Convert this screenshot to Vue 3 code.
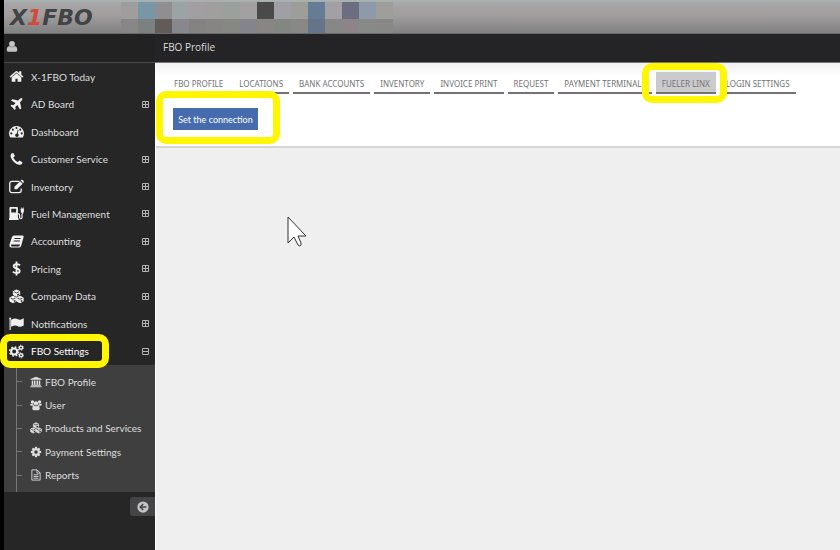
<script setup>
const pixels = [
  ['#a09d9e', '#7796a6', '#918e91', '#9ba3a5', '#a29fa2', '#a19e9e', '#9ca09d', '#a3a0a2', '#4a4a4a', '#a09fa6', '#9d9e9a', '#647c96', '#a39fa2', '#6a6e80', '#8e9aaa', '#9e9e9a'],
  ['#888787', '#7b8080', '#615c58', '#88878e', '#858282', '#868583', '#868884', '#84848c', '#888584', '#838782', '#888886', '#66748a', '#888788', '#8c8487', '#878b87', '#888887'],
].flat()

const menu = [
  { label: 'X-1FBO Today', icon: 'home' },
  { label: 'AD Board', icon: 'plane', more: true },
  { label: 'Dashboard', icon: 'gauge' },
  { label: 'Customer Service', icon: 'phone', more: true },
  { label: 'Inventory', icon: 'edit', more: true },
  { label: 'Fuel Management', icon: 'fuel', more: true },
  { label: 'Accounting', icon: 'book', more: true },
  { label: 'Pricing', icon: 'dollar', more: true },
  { label: 'Company Data', icon: 'cubes', more: true },
  { label: 'Notifications', icon: 'flag', more: true },
  { label: 'FBO Settings', icon: 'cogs', more: true, open: true },
]

const settings = [
  { label: 'FBO Profile', icon: 'bank' },
  { label: 'User', icon: 'users' },
  { label: 'Products and Services', icon: 'cubes' },
  { label: 'Payment Settings', icon: 'cog' },
  { label: 'Reports', icon: 'report' },
]

const tabs = ['FBO PROFILE', 'LOCATIONS', 'BANK ACCOUNTS', 'INVENTORY', 'INVOICE PRINT', 'REQUEST', 'PAYMENT TERMINALS', 'FUELER LINX', 'LOGIN SETTINGS']
const activeTab = 'FUELER LINX'
</script>

<template>
  <svg class="sprite" aria-hidden="true">
    <symbol id="home" viewBox="0 0 1792 1792"><path d="M1472 992v480q0 26-19 45t-45 19h-384v-384h-256v384h-384q-26 0-45-19t-19-45v-480q0-1 .5-3t.5-3l575-474 575 474q1 2 1 6zm223-69l-62 74q-8 9-21 11h-3q-13 0-21-7l-692-577-692 577q-12 8-24 7-13-2-21-11l-62-74q-8-10-7-23.5t11-21.5l719-599q32-26 76-26t76 26l244 204v-195q0-14 9-23t23-9h192q14 0 23 9t9 23v408l219 182q10 8 11 21.5t-7 23.5z" /></symbol>
    <symbol id="plane" viewBox="0 0 1792 1792"><path d="M1568 160q44 52 12 148t-108 172l-161 161 160 696q5 19-12 33l-128 96q-7 6-19 6-4 0-7-1-15-3-21-16l-279-508-259 259 53 194q5 17-8 31l-96 96q-9 9-23 9h-2q-15-2-24-13l-189-252-252-189q-11-7-13-23-1-13 9-25l96-97q9-9 23-9 6 0 8 1l194 53 259-259-508-279q-14-8-17-24-2-16 9-27l128-128q14-13 30-8l665 159 160-160q76-76 172-108t148 12z" /></symbol>
    <symbol id="gauge" viewBox="0 0 16 16">
      <path fill-rule="evenodd" d="M8 2a8 8 0 0 0-6.800 12.100q.3.400.8.400h12q.5 0 .8-.4A8 8 0 0 0 8 2zM8 3.200a1.100 1.100 0 1 1 0 2.200a1.100 1.100 0 0 1 0-2.200zM4.100 4.900a1.100 1.100 0 1 1 0 2.200a1.100 1.100 0 0 1 0-2.200zM2.400 8.900a1.100 1.100 0 1 1 0 2.200a1.100 1.100 0 0 1 0-2.200zM13.600 8.900a1.100 1.100 0 1 1 0 2.200a1.100 1.100 0 0 1 0-2.200zM12 4.900a1.100 1.100 0 1 1 0 2.200a1.100 1.100 0 0 1 0-2.200zM9.300 6.100l.9.300-.9 3.800a1.900 1.900 0 1 1-.9-.2z" />
    </symbol>
    <symbol id="phone" viewBox="0 0 1792 1792"><path d="M1600 1240q0 27-10 70.5t-21 68.5q-21 50-122 106-94 51-186 51-27 0-53-3.500t-57.500-12.500-47-14.500-55.500-20.500-49-18q-98-35-175-83-127-79-264-216t-216-264q-48-77-83-175-3-9-18-49t-20.500-55.500-14.500-47-12.500-57.500-3.500-53q0-92 51-186 56-101 106-122 25-11 68.500-21t70.500-10q14 0 21 3 18 6 53 76 11 19 30 54t35 63.500 31 53.500q3 4 17.500 25t21.500 35.500 7 28.500q0 20-28.500 50t-62 55-62 53-28.500 46q0 9 5 22.500t8.500 20.500 14 24 11.500 19q76 137 174 235t235 174q2 1 19 11.500t24 14 20.500 8.500 22.500 5q18 0 46-28.500t53-62 55-62 50-28.500q14 0 28.500 7t35.500 21.500 25 17.500q25 15 53.500 31t63.500 35 54 30q70 35 76 53 3 7 3 21z" /></symbol>
    <symbol id="edit" viewBox="0 0 16 16">
      <path d="M11 2.500H3A2.200 2.200 0 0 0 .8 4.700v7.600A2.200 2.200 0 0 0 3 14.500h7.800a2.200 2.200 0 0 0 2.200-2.200V10" fill="none" stroke="currentColor" stroke-width="1.400" />
      <path d="M5.800 8.300l6-6 2.700 2.700-6 6H5.800zM12.500 1.700l.8-.8q.5-.4 1 0l1.500 1.500q.4.500 0 1l-.8.900z" />
    </symbol>
    <symbol id="fuel" viewBox="0 0 16 16">
      <path fill-rule="evenodd" d="M1.500 1h7q1 0 1 1v11h.7v2H0v-2h.5V2q0-1 1-1zM2.400 3v4h5.200V3z" />
      <path d="M9.500 8.500h.8q1 0 1 1v2.800q0 1.300 1.300 1.300t1.300-1.300V9.500q0-1 .6-2l.5-4.500" fill="none" stroke="currentColor" stroke-width="1.300" />
      <path d="M12.200 3.200l1-.4V1.500h.8v1.200h.8V1.500h.8v1.700l.4 2.600-1.500 2-1.600-1z" />
    </symbol>
    <symbol id="book" viewBox="0 0 16 16">
      <path fill-rule="evenodd" d="M5.400 1.500h9q1.500.2 1.200 1.800l-2.600 9.200q-.5 2-2.500 2H2.400Q.2 14.300.5 12l.1-1L3.200 3.300q.6-1.800 2.200-1.800zM6 4.300l-.3 1h6.500l.3-1zM5.200 6.900l-.3 1h6.500l.3-1zM2.500 11.300q-1 1.600.3 1.900h7.500q.8 0 1.100-.9l.3-1z" />
    </symbol>
    <symbol id="dollar" viewBox="0 0 16 16"><path d="M11.800 4.600Q10.200 3.300 8 3.300q-3 0-3 2.200 0 1.500 3 2.400 3.400.9 3.400 2.800 0 2.200-3.300 2.200-2.300 0-4-1.600M8 .5v15" fill="none" stroke="currentColor" stroke-width="2" /></symbol>
    <symbol id="cubes" viewBox="0 0 16 16">
      <g stroke="currentColor" stroke-width="1" stroke-linejoin="round">
        <path d="M8 1l3.400 1.500v3.700L8 7.800 4.600 6.200V2.500z" />
        <path d="M4.300 7.800l3.400 1.500V13l-3.400 1.700L.9 13V9.300z" />
        <path d="M11.700 7.800l3.400 1.500V13l-3.400 1.700L8.300 13V9.300z" />
      </g>
      <g fill="none" stroke="#262627" stroke-width=".9">
        <path d="M5.400 3l2.600 1.100L10.600 3M1.700 9.800l2.600 1.100 2.600-1.100M9.100 9.800l2.600 1.100 2.600-1.100" />
        <path d="M8.800 6.500l1.800-.9M5.100 13.300l1.800-.9M12.500 13.300l1.800-.9" stroke-width="1.500" />
      </g>
    </symbol>
    <symbol id="flag" viewBox="0 0 16 16">
      <path d="M1.200 1.500a1.100 1.100 0 0 1 .6 2V15H.6V3.500a1.100 1.100 0 0 1 .6-2z" />
      <path d="M2.200 3.900Q5 2.600 6.600 2.600q1.200 0 3 .9 1 .6 2.300.4Q13.500 3.600 15.700 2.400v7.700q-2.400 1.400-4 1.400-1.200 0-2.800-.9-1-.5-2.200-.4-1.600 0-4.500 1.300z" />
    </symbol>
    <symbol id="cog" viewBox="0 0 1792 1792"><path d="M1152 896q0-106-75-181t-181-75-181 75-75 181 75 181 181 75 181-75 75-181zm512-109v222q0 12-8 23t-20 13l-185 28q-19 54-39 91 35 50 107 138 10 12 10 25t-9 23q-27 37-99 108t-94 71q-12 0-26-9l-138-108q-44 23-91 38-16 136-29 186-7 28-36 28h-222q-14 0-24.500-8.500t-11.500-21.500l-28-184q-49-16-90-37l-141 107q-10 9-25 9-14 0-25-11-126-114-165-168-7-10-7-23 0-12 8-23 15-21 51-66.500t54-70.500q-27-50-41-99l-183-27q-13-2-21-12.500t-8-23.500v-222q0-12 8-23t19-13l186-28q14-46 39-92-40-57-107-138-10-12-10-24 0-10 9-23 26-36 98.500-107.500t94.500-71.500q13 0 26 10l138 107q44-23 91-38 16-136 29-186 7-28 36-28h222q14 0 24.500 8.500t11.500 21.500l28 184q49 16 90 37l142-107q9-9 24-9 13 0 25 10 129 119 165 170 7 8 7 22 0 12-8 23-15 21-51 66.500t-54 70.500q26 50 41 98l183 28q13 2 21 12.500t8 23.500z" /></symbol>
    <symbol id="cogs" viewBox="0 0 16 16">
      <g fill="none" stroke="currentColor">
        <circle cx="5.500" cy="8" r="3.200" stroke-width="2.200" />
        <circle cx="5.500" cy="8" r="4.800" stroke-width="1.500" stroke-dasharray="1.900 1.870" />
        <circle cx="12.800" cy="3.900" r="1.700" stroke-width="1.400" />
        <circle cx="12.800" cy="3.900" r="2.700" stroke-width="1" stroke-dasharray="1.200 1.630" />
        <circle cx="12.800" cy="12.100" r="1.700" stroke-width="1.400" />
        <circle cx="12.800" cy="12.100" r="2.700" stroke-width="1" stroke-dasharray="1.200 1.630" />
      </g>
    </symbol>
    <symbol id="bank" viewBox="0 0 16 16"><path d="M8 1l7.500 3v1H.5V4zM2.300 6h2v6h1V6h2v6h1.400V6h2v6h1V6h2v6h.8v1H1.500v-1h.8zM.5 13.700h15V15H.5z" /></symbol>
    <symbol id="users" viewBox="0 0 16 16">
      <circle cx="3.300" cy="4" r="2.300" /><circle cx="12.700" cy="4" r="2.300" /><circle cx="8" cy="5.800" r="2.900" />
      <path d="M1.500 6.300q1.500.8 3 .4 0 1.500 1 2.300H1.800Q.3 9 .3 7.600q0-1.200 1.200-1.300zM14.500 6.300q-1.500.8-3 .4 0 1.500-1 2.300h3.700q1.500 0 1.500-1.400 0-1.200-1.200-1.300zM5.300 8.800q2.700 1.700 5.400 0 2.300.3 2.300 4 0 2.200-2 2.200H5q-2 0-2-2.200 0-3.700 2.300-4z" />
    </symbol>
    <symbol id="report" viewBox="0 0 16 16"><path d="M2.500 1.200h7l4 4v9.600h-11zM9.300 1.200v4.200h4.200M4.800 7.700h6.400M4.800 10h6.400M4.800 12.300h6.400" fill="none" stroke="currentColor" stroke-width="1.200" /></symbol>
    <symbol id="person" viewBox="0 0 16 16"><path d="M8 .8a3.900 3.900 0 1 1 0 7.800a3.900 3.900 0 0 1 0-7.800zM4.400 7.600q3.600 2.500 7.200 0 3.400.4 3.400 4.900 0 2.500-2.500 2.500h-9Q1 15 1 12.500q0-4.500 3.400-4.900z" /></symbol>
    <symbol id="back" viewBox="0 0 16 16">
      <circle cx="8" cy="8" r="7.500" />
      <path d="M12.500 8H5M8.300 4L4.300 8l4 4" fill="none" stroke="#454547" stroke-width="2" />
    </symbol>
  </svg>

  <div class="page">
    <header class="brand-bar">
      <a class="logo" href="#" aria-label="X1FBO">X<span class="one">1</span>FBO</a>
      <div class="pixels" aria-hidden="true">
        <i v-for="(color, i) in pixels" :key="i" :style="{ background: color }"></i>
      </div>
    </header>

    <div class="body">
      <aside class="sidebar">
        <div class="account"><svg class="person"><use href="#person" /></svg></div>
        <nav>
          <ul class="menu">
            <li v-for="item in menu" :key="item.label">
              <a href="#" :class="{ marked: item.open }">
                <svg class="icon"><use :href="'#' + item.icon" /></svg>
                <span>{{ item.label }}</span>
                <svg v-if="item.more" class="toggle" viewBox="0 0 7 7">
                  <path :d="item.open ? 'M.5.5h6v6h-6zM0 3.500h7' : 'M.5.5h6v6h-6zM0 3.500h7M3.500 0v7'" />
                </svg>
              </a>
            </li>
          </ul>
          <ul class="submenu">
            <li v-for="item in settings" :key="item.label">
              <a href="#"><svg class="small-icon"><use :href="'#' + item.icon" /></svg>{{ item.label }}</a>
            </li>
          </ul>
        </nav>
        <button class="collapse" type="button" aria-label="Collapse menu"><svg><use href="#back" /></svg></button>
      </aside>

      <main>
        <h1>FBO Profile</h1>
        <section class="panel">
          <nav class="tabs">
            <a v-for="tab in tabs" :key="tab" href="#" :class="{ active: tab === activeTab }">{{ tab }}</a>
          </nav>
          <div class="action"><button class="connect" type="button">Set the connection</button></div>
        </section>
        <svg class="pointer" viewBox="0 0 20 31" aria-hidden="true">
          <path d="M1 1v26l6-6 4 8q2 2 3 0v-2l-3-7h8z" fill="#fff" stroke="#333" />
        </svg>
      </main>
    </div>
  </div>
</template>

<style>
body {
  background: #000;
}
</style>

<style scoped>
* {
  box-sizing: border-box;
}

.page {
  display: flex;
  flex-direction: column;
  min-height: 100vh;
  padding-left: 4px;
  font-family: Lato, "Open Sans", sans-serif;
  font-size: 10px;
  color: #dedede;
}

.sprite {
  position: absolute;
  width: 0;
  height: 0;
}

svg {
  flex: none;
  fill: currentColor;
}

a {
  color: inherit;
  text-decoration: none;
}

ul {
  margin: 0;
  padding: 0;
  list-style: none;
}

button {
  padding: 0;
  border: 0;
  font: inherit;
}

.brand-bar {
  display: flex;
  height: 34px;
  padding-top: 2px;
  border-bottom: 1px solid #6b6b6b;
  background: linear-gradient(#a9b3b3, #a6a4a5 12%, #a09e9f 45%, #828182);
}

.logo {
  width: 117px;
  padding-left: 6px;
  font: italic bold 22px/31px "DejaVu Sans", sans-serif;
  color: #414344;
}

.one {
  color: #d5483c;
}

.pixels {
  display: grid;
  grid-template-columns: repeat(16, 17px);
  grid-template-rows: 17px 14px;
}

.body {
  display: flex;
  flex: 1;
}

.sidebar {
  display: flex;
  flex-direction: column;
  width: 151px;
  background: #262627;
}

.account {
  height: 29px;
  padding: 6px 2px;
  border-bottom: 1px solid #48484a;
  background: #222223;
  color: #c4c4c4;
}

.person {
  display: block;
  width: 12px;
  height: 13px;
}

.menu {
  display: grid;
  grid-auto-rows: 1fr;
  min-height: 302px;
}

.menu a {
  position: relative;
  display: flex;
  align-items: center;
  height: 100%;
  padding: 0 6px 0 5px;
}

.icon {
  width: 15px;
  height: 15px;
  margin-right: 7px;
  color: #f0f0f0;
}

.toggle {
  width: 7px;
  height: 7px;
  margin-left: auto;
  fill: none;
  stroke: #b4b4b4;
}

.menu .marked {
  color: #fff;
}

.marked::after,
.active::after,
.action::after {
  content: "";
  position: absolute;
  z-index: 2;
  border: 7px solid #fff600;
  border-radius: 10px;
  pointer-events: none;
}

.marked::after {
  inset: -4px 46px -3px -4px;
}

.submenu {
  display: grid;
  grid-auto-rows: 1fr;
  min-height: 127px;
  padding: 5px 0 5px 12px;
  background: linear-gradient(90deg, transparent 12px, #777 12px, #777 13px, transparent 13px), #3f3f40;
}

.submenu a {
  display: flex;
  align-items: center;
  height: 100%;
}

.submenu a::before {
  content: "";
  width: 6px;
  height: 1px;
  margin-right: 8px;
  background: #777;
}

.small-icon {
  width: 12px;
  height: 12px;
  margin-right: 3px;
}

.collapse {
  display: flex;
  align-items: center;
  justify-content: center;
  align-self: flex-end;
  width: 25px;
  height: 19px;
  margin-top: 5px;
  border-radius: 3px 0 0 3px;
  background: #454547;
  color: #c4c4c4;
}

.collapse svg {
  width: 12px;
  height: 12px;
}

main {
  flex: 1;
  min-width: 0;
  border-left: 1px solid #fff;
  background: #f0eff0;
}

h1 {
  height: 29px;
  margin: 0 0 0 -1px;
  padding-left: 8px;
  border-bottom: 1px solid #777;
  background: #242325;
  font-family: "Open Sans", sans-serif;
  font-size: 10px;
  font-weight: 400;
  line-height: 27px;
}

.panel {
  padding: 9px 12px 16px;
  border-bottom: 2px solid #d5d4d6;
  background: linear-gradient(#f1f1f1, #fff 14px);
}

.tabs {
  display: flex;
  gap: 4px;
}

.tabs a {
  position: relative;
  padding: 3px 6px 0;
  border-bottom: 2px solid #747276;
  font-family: "Noto Sans", sans-serif;
  font-size: 8px;
  line-height: 17px;
  color: #737376;
  white-space: nowrap;
}

.tabs .active {
  background: #cbcacc;
}

.active::after {
  inset: -9px -11px -11px -14px;
}

.action {
  position: relative;
  width: fit-content;
  margin: 14px 0 0 5px;
}

.action::after {
  inset: -17px -22px -14px -17px;
}

.connect {
  display: block;
  width: 85px;
  height: 22px;
  background: #466cae;
  font-size: 9px;
  color: #fff;
}

.pointer {
  display: block;
  width: 20px;
  height: 31px;
  margin: 68px 0 0 131px;
}
</style>
